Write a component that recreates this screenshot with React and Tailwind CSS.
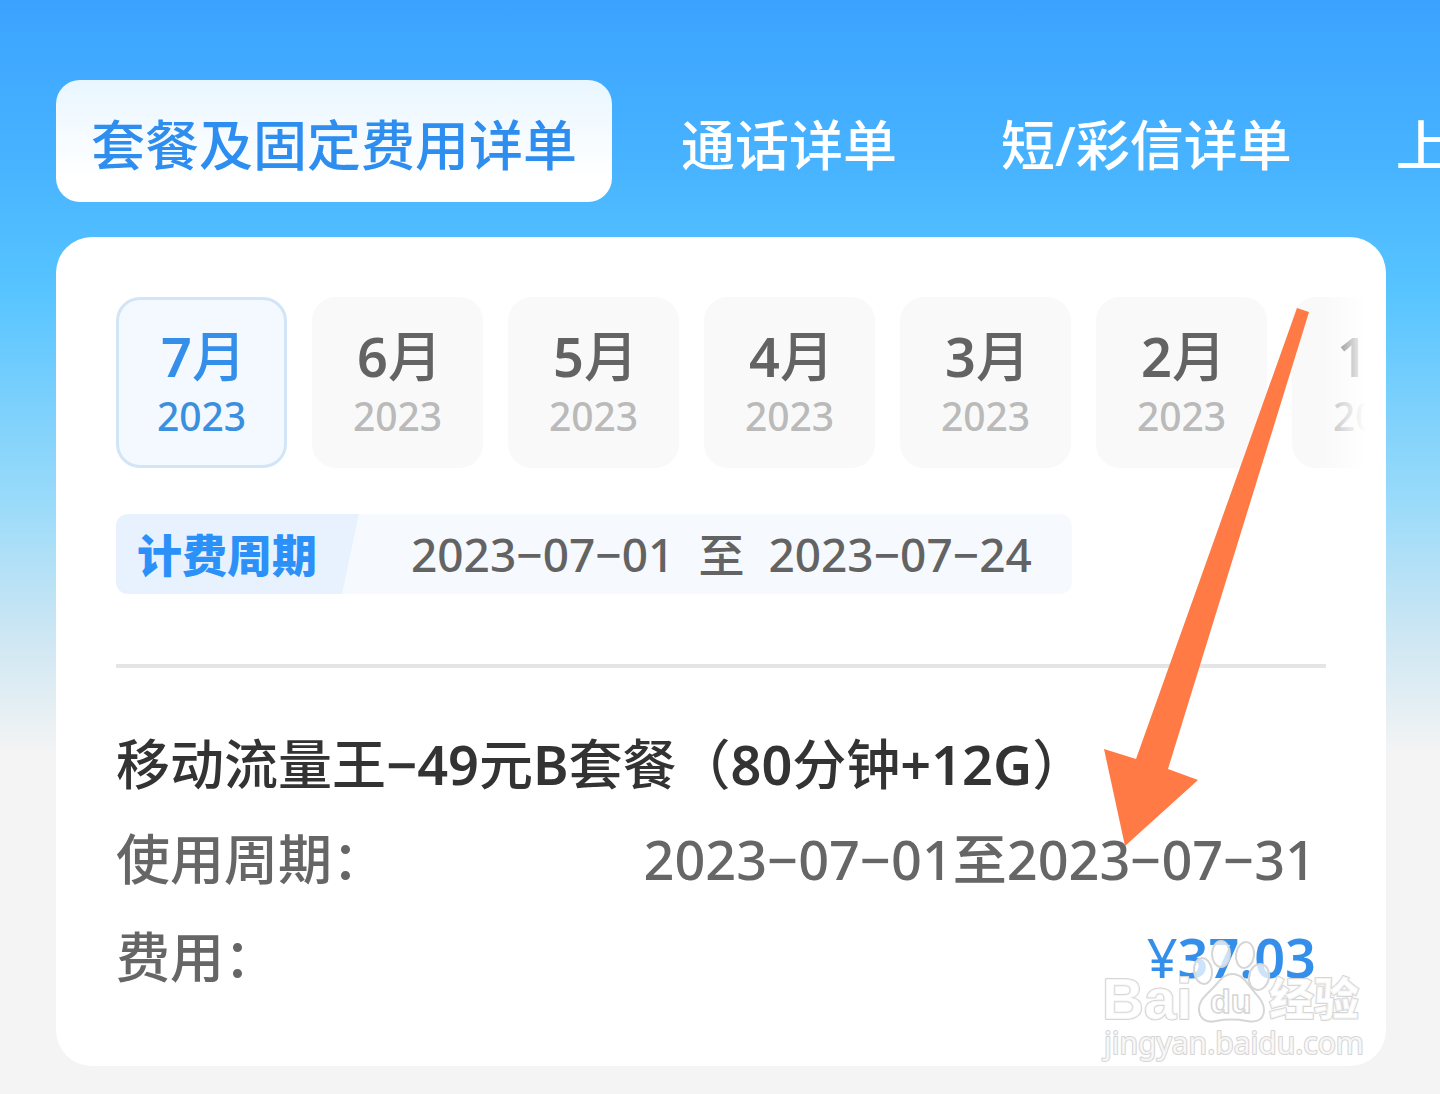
const tabs = ["套餐及固定费用详单", "通话详单", "短/彩信详单", "上网详单"];
const months = ["7", "6", "5", "4", "3", "2", "1"];

function Tabs() {
  return (
    <nav className="flex gap-[34px] overflow-hidden pl-14">
      {tabs.map((t, i) => (
        <button
          key={t}
          type="button"
          className={
            "h-[122px] shrink-0 rounded-[24px] px-[35px] pt-2 text-[54px] leading-none font-medium whitespace-nowrap " +
            (i === 0 ? "bg-linear-to-b from-[#e9f6ff] to-white to-80% text-[#2d8eef]" : "text-white")
          }
        >
          {t}
        </button>
      ))}
    </nav>
  );
}

function Months() {
  return (
    <div className="relative mr-5 ml-[60px] overflow-hidden">
      <div className="flex gap-[25px]">
        {months.map((m, i) => (
          <button
            key={m}
            type="button"
            className={
              "flex h-[171px] w-[171px] shrink-0 flex-col items-center rounded-[24px] border-[3px] pt-[26px] " +
              (i === 0
                ? "border-[#d2e5f7] bg-[#f4f9ff] text-[#348fea]"
                : "border-[#f9f9f9] bg-[#f9f9f9] text-[#636363]")
            }
          >
            <span className="pl-1 text-[54px] leading-[60px] font-medium">
              <span className="font-semibold">{m}</span>月
            </span>
            <span className={"text-[39px] leading-[60px] font-medium " + (i === 0 ? "text-[#3b8fdf]" : "text-[#bababa]")}>
              2023
            </span>
          </button>
        ))}
      </div>
      <div className="absolute inset-y-0 right-0 w-[44px] bg-linear-to-r from-white/0 to-white" />
    </div>
  );
}

function Watermark() {
  return (
    <svg
      viewBox="0 0 270 130"
      className="absolute right-[18px] bottom-0 h-[130px] w-[270px]"
      fill="white"
      fillOpacity="0.75"
      stroke="#d6d6d6"
      strokeWidth="2"
      aria-label="Baidu 经验"
    >
      <g strokeLinejoin="round" style={{ paintOrder: "stroke" }}>
        <text x="4" y="83" fontSize="58" fontWeight="700" fontFamily="Liberation Sans, sans-serif">Bai</text>
        <text x="171" y="80" fontSize="45" fontWeight="900" fontFamily="Noto Sans CJK SC, sans-serif">经验</text>
        <text x="6" y="118" fontSize="30" fontWeight="400" fontFamily="Noto Sans, sans-serif">jingyan.baidu.com</text>
      </g>
      <ellipse cx="105" cy="35" rx="9" ry="13" transform="rotate(-8 105 35)" />
      <ellipse cx="123" cy="18" rx="9" ry="13" />
      <ellipse cx="147" cy="19" rx="9" ry="13" transform="rotate(8 147 19)" />
      <ellipse cx="161" cy="41" rx="10" ry="13" transform="rotate(12 161 41)" />
      <path d="M134 38c-9 0-13 8-19 14-8 8-15 13-14 23 1 9 9 12 17 10 11-2 20-2 31 0 9 2 17-1 17-11 0-9-7-14-13-22-5-7-10-14-19-14Z" />
      <text x="112" y="77" fontSize="34" fontWeight="700" strokeWidth="1.5" fontFamily="Liberation Sans, sans-serif">du</text>
    </svg>
  );
}

function Arrow() {
  return (
    <svg viewBox="0 0 206 540" className="absolute top-[70px] right-[76px] h-[540px] w-[206px]" aria-hidden="true">
      <path fill="#ff7a45" d="M193 1 205 5 64 462 94 473 21 539 0 442 32 452Z" />
    </svg>
  );
}

export default function App() {
  return (
    <main className="min-h-screen overflow-hidden bg-[#f4f4f4] bg-[linear-gradient(to_bottom,#3ba3ff_0px,#48b4ff_170px,#57c4ff_290px,#9bdbfa_505px,#cfe7f3_640px,#f4f4f4_755px)] bg-no-repeat pt-20 pb-7 font-['Noto_Sans','Noto_Sans_CJK_SC',sans-serif]">
      <Tabs />
      <section className="relative mt-[35px] mr-[54px] ml-14 rounded-[36px] bg-white pt-[60px] pb-[60px]">
        <Months />
        <div className="mt-[46px] ml-[60px] flex h-20 w-fit items-center overflow-hidden rounded-[12px] bg-[#f6faff] pr-10">
          <div className="flex h-full w-[243px] items-center bg-[#e8f2fe] pt-1 pl-[21px] text-[45px] font-black text-[#2b90f8] [clip-path:polygon(0_0,100%_0,93%_100%,0_100%)]">
            计费周期
          </div>
          <div className="flex gap-6 pl-[52px] text-[46px] leading-none font-medium text-[#636363]">
            <span>2023−07−01</span>
            <span>至</span>
            <span>2023−07−24</span>
          </div>
        </div>
        <hr className="mx-[60px] mt-[70px] border-t-4 border-[#e5e5e5]" />
        <div className="mx-[60px] mt-[50px] text-[54px] font-medium text-[#666]">
          <h1 className="leading-[92px] text-[#333]">
            移动流量王<span className="font-semibold">−49</span>元<span className="font-semibold">B</span>套餐（
            <span className="font-semibold">80</span>分钟<span className="font-semibold">+12G</span>）
          </h1>
          <dl>
            <div className="flex justify-between pr-[10px] leading-[98px]">
              <dt>使用周期：</dt>
              <dd>2023−07−01至2023−07−31</dd>
            </div>
            <div className="flex justify-between pr-[10px] leading-[98px]">
              <dt>费用：</dt>
              <dd className="font-semibold text-[#348fea]">
                <span className="font-normal">¥</span>37.03
              </dd>
            </div>
          </dl>
        </div>
        <Watermark />
        <Arrow />
      </section>
    </main>
  );
}
